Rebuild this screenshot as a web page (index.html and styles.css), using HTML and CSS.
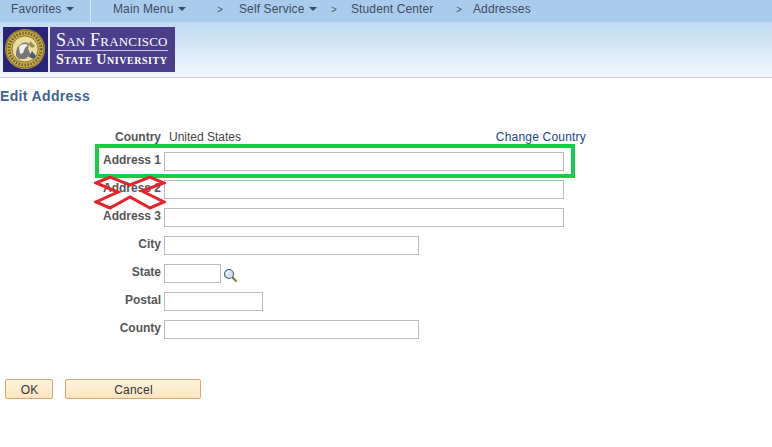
FILE: index.html
```html
<!DOCTYPE html>
<html lang="en">
<head>
    <meta charset="UTF-8">
    <title>Edit Address</title>
    <link rel="stylesheet" href="styles.css">
</head>
<body>
    <div class="nav-bar">
        <span class="nav-item nav-favorites">Favorites <i class="caret"></i></span>
        <span class="nav-sep"></span>
        <span class="nav-item nav-main">Main Menu <i class="caret"></i></span>
        <span class="nav-arrow arrow-one">&gt;</span>
        <span class="nav-item nav-self">Self Service <i class="caret"></i></span>
        <span class="nav-arrow arrow-two">&gt;</span>
        <span class="nav-item nav-student">Student Center</span>
        <span class="nav-arrow arrow-three">&gt;</span>
        <span class="nav-item">Addresses</span>
    </div>
    <div class="banner">
        <div class="logo">
            <div class="logo-seal">
                <svg width="42" height="42" viewBox="0 0 42 42">
                    <circle cx="21" cy="21" r="20" fill="#c9ab45"/>
                    <circle cx="21" cy="21" r="19" fill="none" stroke="#75652c" stroke-width="1"/>
                    <circle cx="21" cy="21" r="16" fill="none" stroke="#6f6130" stroke-width="3" stroke-dasharray="1.5 1.5"/>
                    <circle cx="21" cy="21" r="13" fill="#eadc9c" stroke="#7a6a2e" stroke-width="0.8"/>
                    <path d="M12 28c0-6 1-9 4-11 3-3 7-3 9-1l-1 5 3 6-6 4h-6z" fill="#77777a"/>
                    <path d="M15 19c2-3 6-4 9-2l-3 3-2 5-3 1z" fill="#f2f0e6"/>
                    <path d="M25 29l3-6 4 5-2 3z" fill="#4c5a78"/>
                    <path d="M26 13l5 5-3 2-3-3z" fill="#a08a44"/>
                </svg>
            </div>
            <div class="logo-name">
                <div class="logo-line logo-line-top">San Francisco</div>
                <div class="logo-line">State University</div>
            </div>
        </div>
    </div>

    <h1 class="page-title">Edit Address</h1>

    <div class="form-area">
        <div class="form-grid">
            <label class="field-label country-label">Country</label>
            <div class="country-row">
                <span>United States</span>
                <a href="#" class="change-link">Change Country</a>
            </div>
            <label class="field-label">Address 1</label>
            <div class="field"><input type="text" class="input-wide"></div>
            <label class="field-label">Address 2</label>
            <div class="field"><input type="text" class="input-wide"></div>
            <label class="field-label">Address 3</label>
            <div class="field"><input type="text" class="input-wide"></div>
            <label class="field-label">City</label>
            <div class="field"><input type="text" class="input-medium"></div>
            <label class="field-label">State</label>
            <div class="field">
                <input type="text" class="input-state">
                <svg class="lookup" width="15" height="15" viewBox="0 0 15 15">
                    <line x1="9" y1="9" x2="13.5" y2="13.5" stroke="#8a7a3a" stroke-width="2.2"/>
                    <circle cx="6" cy="6" r="4.5" fill="#cfe3f5" stroke="#50606e" stroke-width="1.1"/>
                    <path d="M3.5 6a2.6 2.6 0 0 1 2.5-2.5" fill="none" stroke="#fff" stroke-width="1"/>
                </svg>
            </div>
            <label class="field-label">Postal</label>
            <div class="field"><input type="text" class="input-postal"></div>
            <label class="field-label">County</label>
            <div class="field"><input type="text" class="input-medium"></div>
        </div>

        <div class="mark-green"></div>
        <svg class="mark-red" width="72" height="36" viewBox="0 0 72 36">
            <polygon points="2,8 16,2 36,10 56,2 70,8 48,16 70,27 56,33 36,22 16,33 2,27 24,17" fill="none" stroke="#e8212b" stroke-width="3"/>
        </svg>
    </div>

    <div class="button-row">
        <button class="btn btn-ok">OK</button>
        <button class="btn btn-cancel">Cancel</button>
    </div>
</body>
</html>
```

FILE: styles.css
```css
body {
    margin: 0;
    font-family: "Liberation Sans", Arial, sans-serif;
    font-size: 12px;
    color: #444;
    background-color: white;
}

.nav-bar {
    display: flex;
    align-items: center;
    height: 22px;
    box-sizing: border-box;
    padding: 0 0 4px 11px;
    background-color: #abcbec;
    color: #3e4c5e;
    letter-spacing: 0.12px;
}

.nav-favorites {
    width: 79px;
}

.nav-sep {
    width: 1px;
    height: 22px;
    margin: 0 22px -4px 0;
    background-color: #dbe8f5;
}

.nav-main {
    width: 104px;
}

.nav-self {
    width: 92px;
}

.nav-student {
    width: 105px;
}

.nav-arrow {
    color: #4a5868;
    font-size: 10px;
}

.arrow-one {
    width: 22px;
}

.arrow-two {
    width: 20px;
}

.arrow-three {
    width: 17px;
}

.caret {
    display: inline-block;
    margin-left: 1px;
    vertical-align: 2px;
    border-top: 4px solid #3e4c5e;
    border-left: 4px solid transparent;
    border-right: 4px solid transparent;
}

.banner {
    height: 56px;
    box-sizing: border-box;
    padding: 5px 0 0 3px;
    background: linear-gradient(#bfdaf2, #f2f7fe);
    border-bottom: 1px solid #cccccc;
}

.logo {
    display: flex;
    width: 172px;
    height: 45px;
    background-color: #4b3f8c;
}

.logo-seal {
    width: 47px;
    height: 45px;
    padding: 1px 0 0 1px;
    box-sizing: border-box;
    background-color: #2a2478;
    border-right: 2px solid #dfe6f4;
    margin-right: 6px;
}

.logo-name {
    color: white;
    font-family: "Liberation Serif", serif;
    font-variant: small-caps;
    padding-top: 4px;
}

.logo-line {
    font-size: 14px;
    font-weight: bold;
    line-height: 14px;
    white-space: nowrap;
    letter-spacing: 0.55px;
}

.logo-line-top {
    width: 112px;
    font-size: 18px;
    line-height: 19px;
    font-weight: normal;
    letter-spacing: 0.2px;
    border-bottom: 1px solid #c9c5e0;
    margin-bottom: 2px;
}

.page-title {
    margin: 10px 0 0 0;
    font-size: 14px;
    line-height: 16px;
    font-weight: bold;
    letter-spacing: 0.35px;
    color: #3f6393;
}

.form-area {
    position: relative;
    margin-top: 21px;
}

.form-grid {
    display: grid;
    grid-template-columns: 161px 1fr;
    grid-template-rows: 23px;
    grid-auto-rows: 28px;
    column-gap: 3px;
    align-items: center;
}

.field-label {
    text-align: right;
    font-weight: bold;
    color: #555;
    padding-bottom: 5px;
}

.country-label {
    padding-bottom: 0;
}

.country-row {
    display: flex;
    width: 417px;
    justify-content: space-between;
    padding-left: 5px;
}

.change-link {
    color: #17448c;
    text-decoration: none;
    letter-spacing: 0.2px;
}

.field {
    display: flex;
    align-items: center;
    padding-bottom: 1px;
}

.field input {
    box-sizing: border-box;
    height: 19px;
    padding: 0;
    border: 1px solid #bbbbbb;
    background-color: white;
}

.input-wide {
    width: 400px;
}

.input-medium {
    width: 255px;
}

.input-state {
    width: 57px;
}

.input-postal {
    width: 99px;
}

.lookup {
    margin: 3px 0 0 2px;
}

.mark-green {
    position: absolute;
    left: 95px;
    top: 19px;
    width: 480px;
    height: 34px;
    box-sizing: border-box;
    border: 4px solid #14cf45;
}

.mark-red {
    position: absolute;
    left: 94px;
    top: 50px;
}

.button-row {
    display: flex;
    gap: 12px;
    padding-left: 5px;
    margin-top: 35px;
}

.btn {
    height: 20px;
    padding: 1px 0 0 1px;
    font-family: "Liberation Sans", Arial, sans-serif;
    font-size: 12px;
    letter-spacing: 0.2px;
    color: #333;
    background: linear-gradient(#fdf3dd, #fae5bf);
    border: 1px solid #dda673;
    border-radius: 2px;
}

.btn-ok {
    width: 48px;
}

.btn-cancel {
    width: 136px;
}
```
